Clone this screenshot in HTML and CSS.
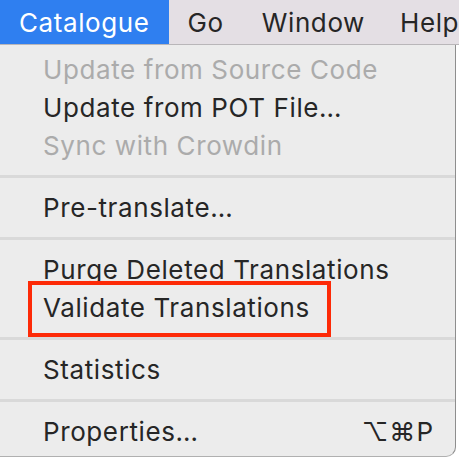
FILE: index.html
```html
<!DOCTYPE html>
<html>
<head>
<meta charset="utf-8">
<link rel="stylesheet" href="styles.css">
</head>
<body>
<div class="screen">
  <div class="menubar">
    <div class="mb-item active">Catalogue</div>
    <div class="mb-item">Go</div>
    <div class="mb-item">Window</div>
    <div class="mb-item last">Help</div>
  </div>
  <div class="panel">
    <div class="row disabled"><span class="label">Update from Source Code</span></div>
    <div class="row"><span class="label">Update from POT File…</span></div>
    <div class="row disabled"><span class="label">Sync with Crowdin</span></div>
    <div class="sep"></div>
    <div class="row"><span class="label">Pre-translate…</span></div>
    <div class="sep"></div>
    <div class="row"><span class="label">Purge Deleted Translations</span></div>
    <div class="row highlight-wrap"><span class="label">Validate Translations</span><div class="redbox"></div></div>
    <div class="sep"></div>
    <div class="row"><span class="label">Statistics</span></div>
    <div class="sep"></div>
    <div class="row"><span class="label">Properties…</span><span class="shortcut">⌥⌘P</span></div>
  </div>
</div>
</body>
</html>
```

FILE: styles.css
```css
html, body {
  margin: 0;
  padding: 0;
  background: #ffffff;
}
.screen {
  width: 459px;
  height: 460px;
  overflow: hidden;
  font-family: Inter, "Noto Sans", "DejaVu Sans", sans-serif;
  font-size: 26px;
  letter-spacing: 0.6px;
  color: #262626;
  background: #ffffff;
}
.menubar {
  display: flex;
  height: 44px;
  background: #e4dfe4;
  border-bottom: 1px solid #b9b6b9;
  overflow: hidden;
}
.mb-item {
  display: flex;
  align-items: center;
  padding: 0 19px;
  color: #262626;
  white-space: nowrap;
}
.mb-item.active {
  background: #2f7ff0;
  color: #ffffff;
}
.mb-item.last {
  padding-left: 16px;
}
.panel {
  width: 456px;
  box-sizing: border-box;
  background: #ececec;
  border-right: 1px solid #8e8e8e;
  border-bottom: 1px solid #b0b0b0;
  border-bottom-right-radius: 10px;
  padding: 5px 0 6px 0;
}
.row {
  position: relative;
  display: flex;
  align-items: center;
  justify-content: space-between;
  height: 38px;
  padding: 0 21px 0 43px;
  white-space: nowrap;
}
.row.disabled {
  color: #ababab;
}
.sep {
  height: 24px;
  display: flex;
  align-items: center;
}
.sep::before {
  content: "";
  display: block;
  width: 100%;
  height: 3px;
  background: #d9d9d9;
}
.shortcut {
  letter-spacing: 1px;
}
.redbox {
  position: absolute;
  left: 28px;
  top: -7px;
  width: 303px;
  height: 56px;
  box-sizing: border-box;
  border: 4px solid #fd2a07;
}
```
